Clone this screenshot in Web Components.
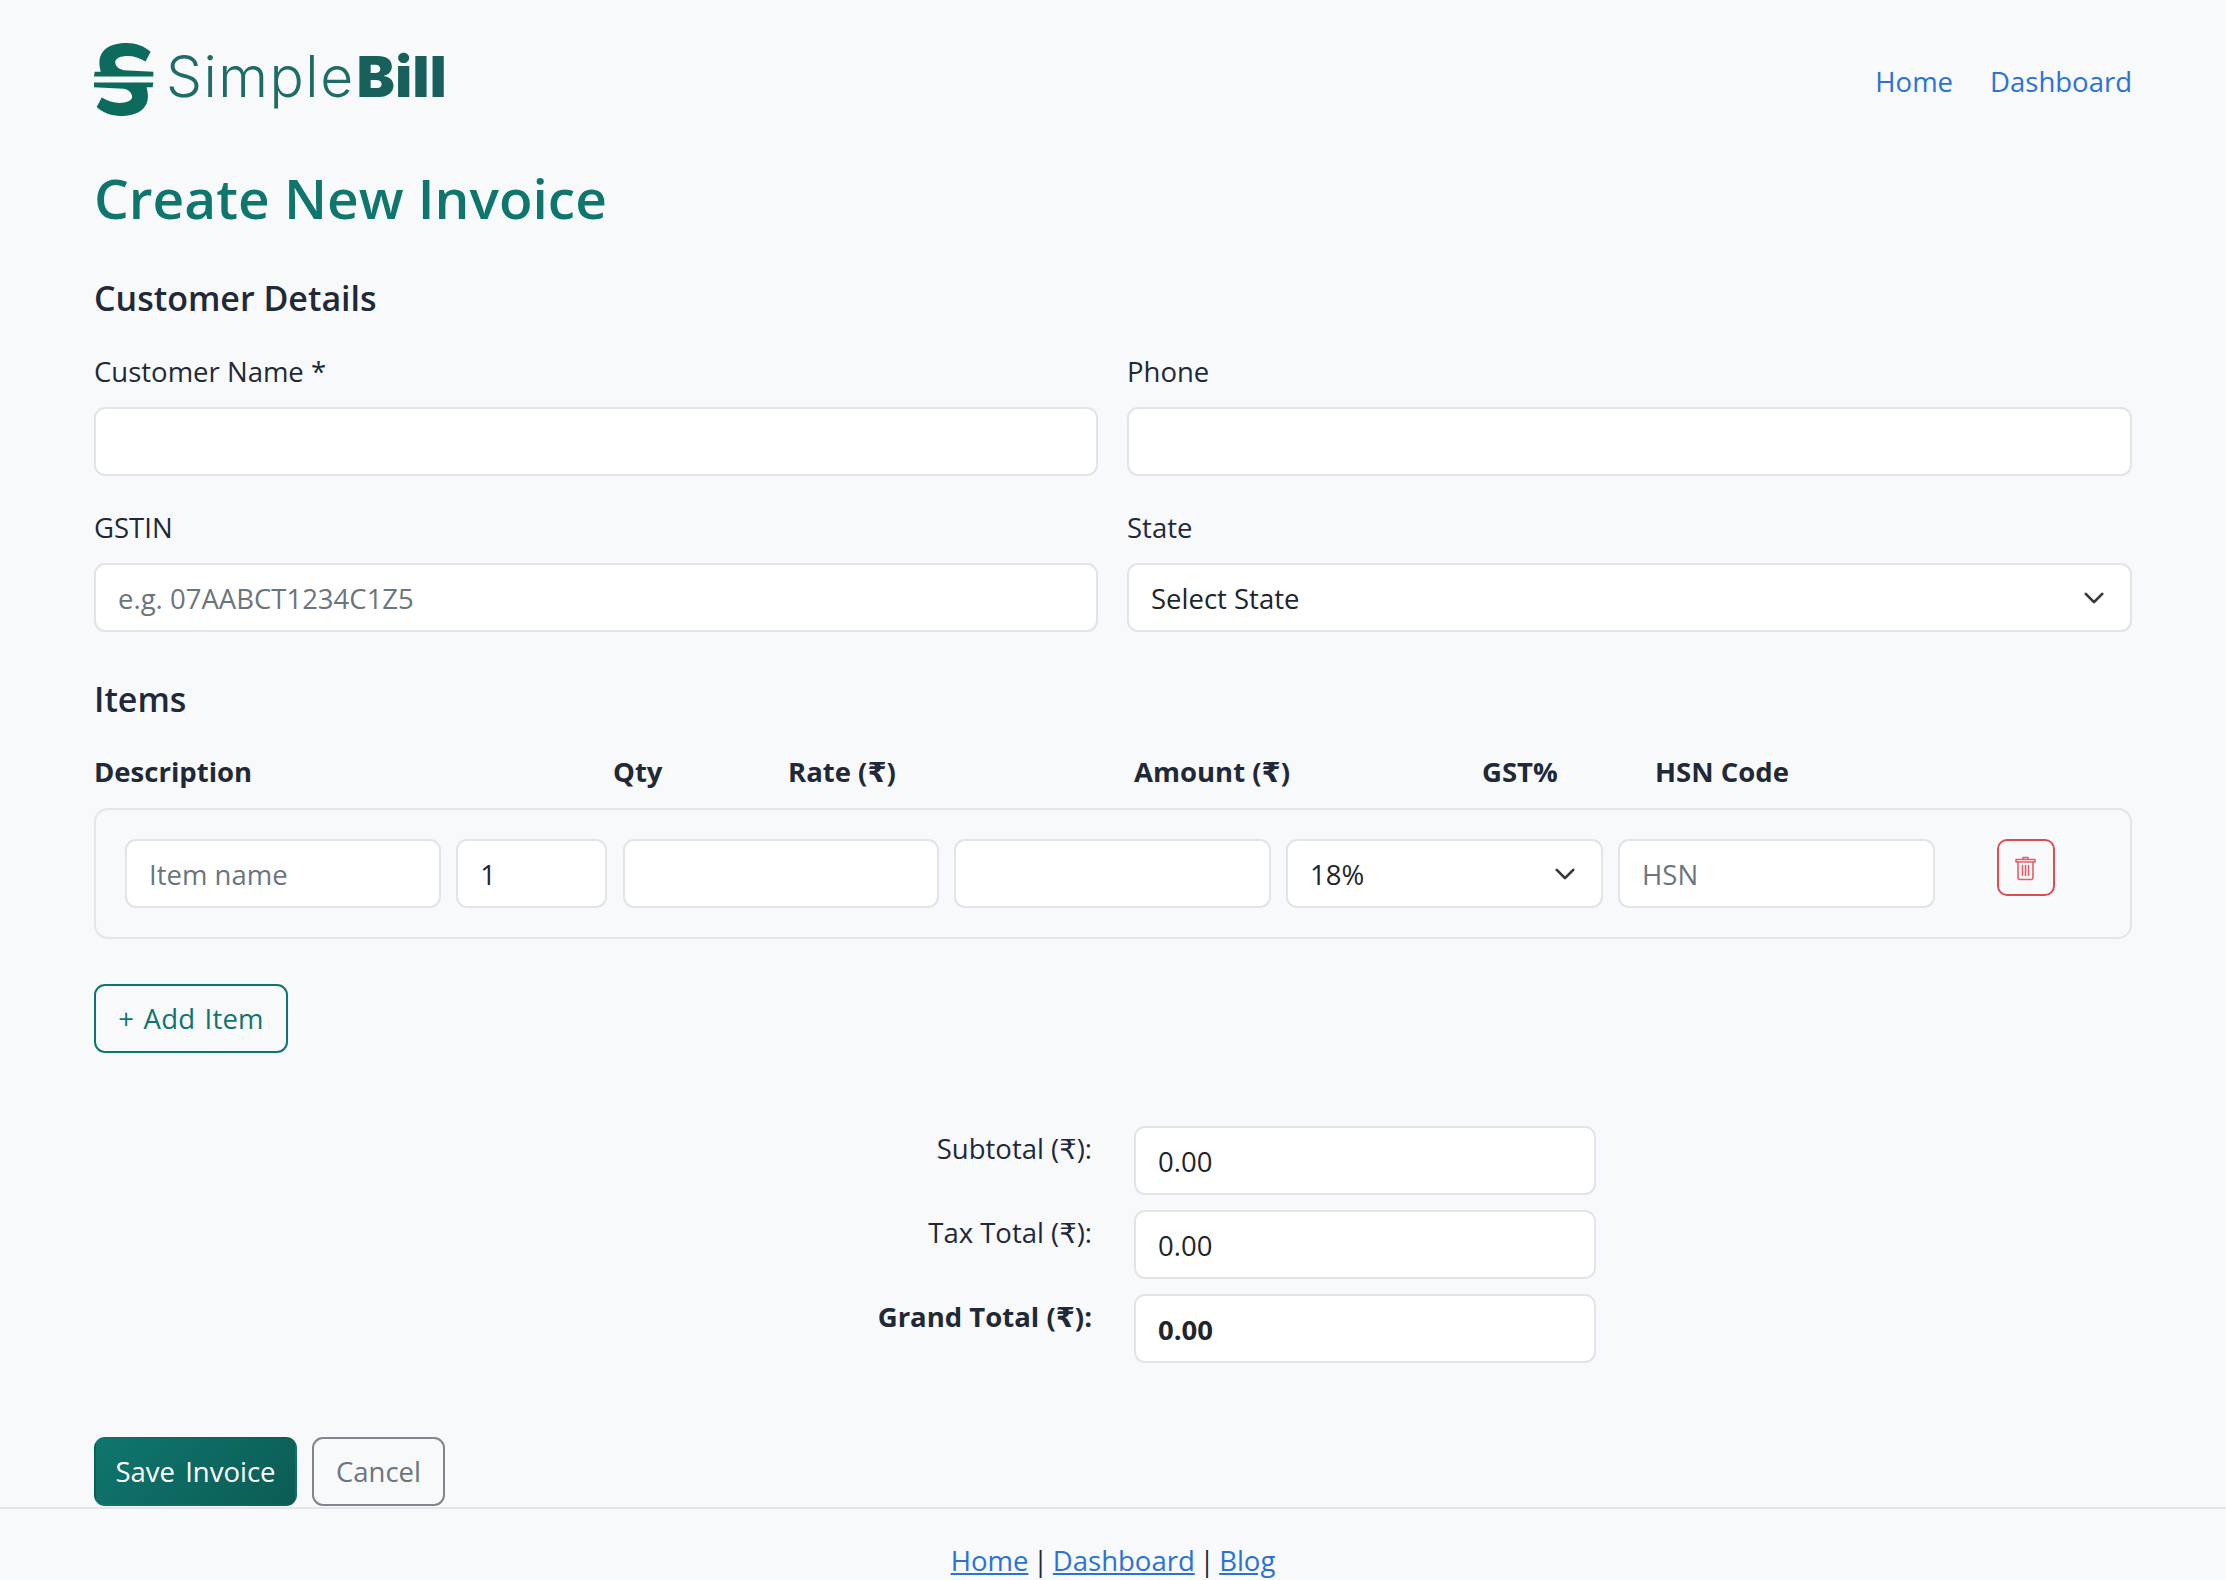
<!DOCTYPE html>
<html lang="en">
<head>
<meta charset="utf-8">
<title>SimpleBill</title>
<style>
  html, body { margin: 0; height: 1580px; overflow: hidden; background: #f8f9fb; }
  body { font-family: "Open Sans", "DejaVu Sans", sans-serif; font-size: 27.5px; color: #1f2937; }
</style>
</head>
<body>
<sb-app>
  <sb-navbar></sb-navbar>
  <sb-title>Create New Invoice</sb-title>

  <sb-section-title style="margin-top:45px">Customer Details</sb-section-title>
  <sb-form-grid style="margin-top:30px">
    <sb-field label="Customer Name *"><sb-input></sb-input></sb-field>
    <sb-field label="Phone"><sb-input></sb-input></sb-field>
    <sb-field label="GSTIN"><sb-input placeholder="e.g. 07AABCT1234C1Z5"></sb-input></sb-field>
    <sb-field label="State"><sb-select value="Select State"></sb-select></sb-field>
  </sb-form-grid>

  <sb-section-title style="margin-top:46px">Items</sb-section-title>
  <sb-items-head style="margin-top:29px"></sb-items-head>
  <sb-item-row style="margin-top:15px"></sb-item-row>
  <sb-button variant="add" style="margin-top:45px">+ Add Item</sb-button>

  <sb-totals style="margin-top:73px">
    <sb-total-row label="Subtotal (₹):" value="0.00"></sb-total-row>
    <sb-total-row label="Tax Total (₹):" value="0.00"></sb-total-row>
    <sb-total-row label="Grand Total (₹):" value="0.00" strong></sb-total-row>
  </sb-totals>

  <sb-actions style="margin-top:74px">
    <sb-button variant="save">Save Invoice</sb-button>
    <sb-button variant="cancel">Cancel</sb-button>
  </sb-actions>
</sb-app>
<sb-footer></sb-footer>

<script>
  // small helper, every element just stamps its markup into an open shadow root
  function define (name, html, extra = {}) {
    customElements.define(name, class extends HTMLElement {
      constructor () {
        super()
        this.attachShadow({ mode: 'open' }).innerHTML = html
        if (extra.init) extra.init(this)
      }
    })
  }

  const controlCss = `
    input, .select {
      box-sizing: border-box;
      display: block;
      width: 100%;
      height: 69px;
      padding: 2px 22px 0;
      border: 2px solid #e1e4e9;
      border-radius: 11px;
      background: #fff;
      font: inherit;
      color: #212529;
      outline: none;
    }
    input::placeholder { color: #6c757d; opacity: 1; }
  `

  // half of the logo mark, the other half is the same path turned around
  const logoHalf = 'M210 68C190 50 165 42 140 42C90 42 58 62 58 100C58 110 60 118 62 126L44 126L42 140L218 140L218 126L130 122C112 118 105 108 105 98C105 86 122 80 142 80C160 80 178 86 195 96Z'

  define('sb-app', `
    <style>
      :host { display: block; padding: 43px 94px 0 94px; }
    </style>
    <slot></slot>
  `)

  define('sb-navbar', `
    <style>
      :host { display: flex; justify-content: space-between; align-items: flex-start; height: 75px; }
      .brand { display: flex; gap: 12px; }
      svg { display: block; width: 60px; height: 75px; }
      .name { font-family: Inter, sans-serif; font-size: 57px; line-height: 68px; font-weight: 300; color: #1f6b66; letter-spacing: 1.5px; white-space: nowrap; }
      b { font-weight: 900; color: #17605b; margin-left: 2px; letter-spacing: 0.4px; }
      nav { display: flex; gap: 37px; padding-top: 17px; }
      a { color: #2a72d5; text-decoration: none; line-height: 43px; }
    </style>
    <div class="brand">
      <svg viewBox="42 42 178 220" preserveAspectRatio="none" fill="#0d6b5e" aria-hidden="true">
        <path d="${logoHalf}"/>
        <path d="${logoHalf}" transform="rotate(180 130 149)"/>
      </svg>
      <div class="name">Simple<b>Bill</b></div>
    </div>
    <nav><a href="#">Home</a><a href="#">Dashboard</a></nav>
  `)

  define('sb-title', `
    <style>
      :host { display: block; margin-top: 45px; font-size: 55px; line-height: 69px; font-weight: 600; color: #0f766e; }
    </style>
    <slot></slot>
  `)

  define('sb-section-title', `
    <style>
      :host { display: block; font-size: 34px; line-height: 43px; font-weight: 600; color: #1f2937; }
    </style>
    <slot></slot>
  `)

  define('sb-form-grid', `
    <style>
      :host { display: grid; grid-template-columns: 1004px 1fr; column-gap: 29px; row-gap: 30px; }
    </style>
    <slot></slot>
  `)

  define('sb-field', `
    <style>
      :host { display: block; }
      label { display: block; line-height: 43px; margin-bottom: 14px; }
    </style>
    <label></label>
    <slot></slot>
  `, { init: (el) => { el.shadowRoot.querySelector('label').textContent = el.getAttribute('label') } })

  define('sb-input', `
    <style>
      :host { display: block; }
      ${controlCss}
    </style>
    <input>
  `, {
    init: (el) => {
      const input = el.shadowRoot.querySelector('input')
      input.placeholder = el.getAttribute('placeholder') || ''
      input.setAttribute('value', el.getAttribute('value') || '')
      if (el.hasAttribute('strong')) input.style.fontWeight = '700'
    }
  })

  define('sb-select', `
    <style>
      :host { display: block; position: relative; }
      ${controlCss}
      .select { display: flex; align-items: center; }
      svg { position: absolute; right: 27px; top: 24px; width: 22px; height: 22px; }
    </style>
    <div class="select"></div>
    <svg viewBox="0 0 16 16" fill="none" stroke="#343a40" stroke-width="2" stroke-linecap="round" stroke-linejoin="round"><path d="M2 5l6 6 6-6"/></svg>
  `, { init: (el) => { el.shadowRoot.querySelector('.select').textContent = el.getAttribute('value') } })

  define('sb-items-head', `
    <style>
      :host { display: grid; grid-template-columns: 519px 175px 346px 348px 173px 1fr; line-height: 43px; font-weight: 700; color: #1f2937; }
    </style>
    <div>Description</div><div>Qty</div><div>Rate (₹)</div><div>Amount (₹)</div><div>GST%</div><div>HSN Code</div>
  `)

  define('sb-item-row', `
    <style>
      :host {
        display: grid;
        grid-template-columns: 316px 151px 316px 316.8px 316.8px 316.8px 1fr;
        column-gap: 15.3px;
        padding: 29px 29px 29px;
        border: 2px solid #e4e6ea;
        border-radius: 14px;
      }
      .del { justify-self: center; align-self: start; }
    </style>
    <sb-input placeholder="Item name"></sb-input>
    <sb-input value="1"></sb-input>
    <sb-input></sb-input>
    <sb-input></sb-input>
    <sb-select value="18%"></sb-select>
    <sb-input placeholder="HSN"></sb-input>
    <sb-delete-button class="del"></sb-delete-button>
  `)

  define('sb-delete-button', `
    <style>
      :host { display: flex; align-items: center; justify-content: center; box-sizing: border-box; width: 58px; height: 57px; border: 2px solid #dc4c55; border-radius: 10px; }
      svg { width: 23px; height: 26px; }
    </style>
    <svg viewBox="0 0 23 26" fill="none" stroke="#e0606a" stroke-width="1.6" stroke-linecap="round" stroke-linejoin="round" aria-hidden="true">
      <path d="M2 4.5h19v2.5H2z"/>
      <path d="M9 4.5V2.5h5v2"/>
      <path d="M4 7v15.5a2 2 0 0 0 2 2h11a2 2 0 0 0 2-2V7"/>
      <path d="M8.5 10.5v10M11.5 10.5v10M14.5 10.5v10"/>
    </svg>
  `)

  define('sb-button', `
    <style>
      :host { display: inline-block; }
      button {
        box-sizing: border-box;
        height: 69px;
        padding: 0;
        border: 2px solid transparent;
        border-radius: 11px;
        background: none;
        font: inherit;
        white-space: nowrap;
        cursor: pointer;
      }
      :host([variant=add]) button { width: 194px; border-color: #0f766e; color: #0f766e; word-spacing: 2px; letter-spacing: 0.2px; }
      :host([variant=save]) button { width: 203px; background: linear-gradient(135deg, #0f766e, #0b5c54); color: #fff; word-spacing: 3px; }
      :host([variant=cancel]) button { width: 133px; border-color: #80868d; color: #6c757d; }
    </style>
    <button type="button"><slot></slot></button>
  `)

  define('sb-totals', `
    <style>
      :host { display: grid; row-gap: 15px; }
    </style>
    <slot></slot>
  `)

  define('sb-total-row', `
    <style>
      :host { display: grid; grid-template-columns: 998px 462px; column-gap: 42px; }
      label { text-align: right; line-height: 43px; padding-top: 1px; }
      :host([strong]) label { font-weight: 700; }
    </style>
    <label></label>
    <sb-input></sb-input>
  `, {
    init: (el) => {
      const root = el.shadowRoot
      root.querySelector('label').textContent = el.getAttribute('label')
      const input = root.querySelector('sb-input').shadowRoot.querySelector('input')
      input.setAttribute('value', el.getAttribute('value'))
      if (el.hasAttribute('strong')) input.style.fontWeight = '700'
    }
  })

  define('sb-actions', `
    <style>
      :host { display: flex; gap: 15px; height: 69px; }
    </style>
    <slot></slot>
  `)

  define('sb-footer', `
    <style>
      :host { display: block; margin-top: 1px; padding-top: 30px; border-top: 2px solid #e4e6ea; text-align: center; line-height: 43px; word-spacing: -2.5px; }
      a { color: #2a72d5; }
    </style>
    <a href="#">Home</a> | <a href="#">Dashboard</a> | <a href="#">Blog</a>
  `)
</script>
</body>
</html>
